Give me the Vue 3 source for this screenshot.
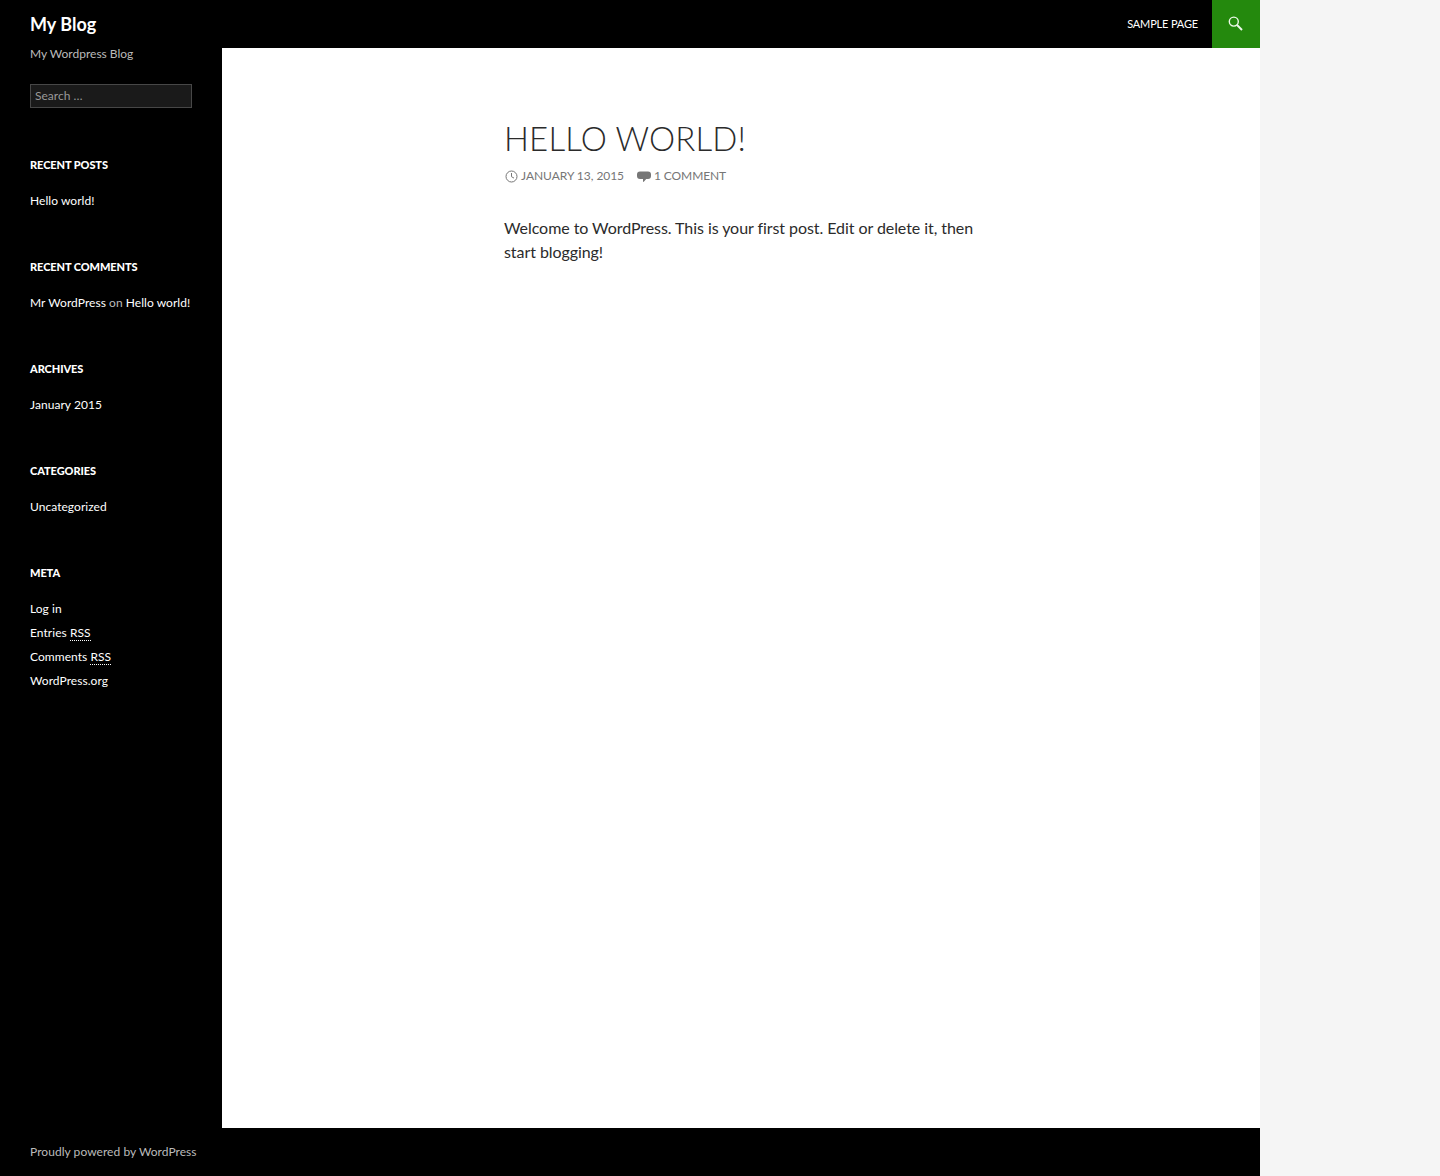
<script setup>
const widgets = [
  { title: 'Recent Posts', items: [[{ t: 'Hello world!', a: 1 }]] },
  { title: 'Recent Comments', items: [[{ t: 'Mr WordPress', a: 1 }, { t: ' on ' }, { t: 'Hello world!', a: 1 }]] },
  { title: 'Archives', items: [[{ t: 'January 2015', a: 1 }]] },
  { title: 'Categories', items: [[{ t: 'Uncategorized', a: 1 }]] },
  {
    title: 'Meta',
    items: [
      [{ t: 'Log in', a: 1 }],
      [{ t: 'Entries ', a: 1 }, { t: 'RSS', abbr: 'Really Simple Syndication' }],
      [{ t: 'Comments ', a: 1 }, { t: 'RSS', abbr: 'Really Simple Syndication' }],
      [{ t: 'WordPress.org', a: 1 }]
    ]
  }
]
</script>

<template>
  <div class="page">
    <header class="masthead">
      <a class="site-title" href="#">My Blog</a>
      <nav class="nav">
        <a href="#">Sample Page</a>
      </nav>
      <div class="search-toggle">
        <svg width="16" height="16" viewBox="0 0 16 16" fill="none" stroke="#eef8ea" aria-hidden="true">
          <circle cx="5.8" cy="5.6" r="4.5" stroke-width="1.4" />
          <path d="M9.1 9 L14 14" stroke-width="1.9" />
        </svg>
      </div>
    </header>
    <div class="main">
      <aside class="sidebar">
        <p class="desc">My Wordpress Blog</p>
        <input class="search" type="search" placeholder="Search …" />
        <section v-for="w in widgets" :key="w.title" class="widget">
          <h1 class="widget-title">{{ w.title }}</h1>
          <ul class="list">
            <li v-for="(row, i) in w.items" :key="i">
              <template v-for="(part, j) in row" :key="j">
                <a v-if="part.a" href="#">{{ part.t }}</a>
                <abbr v-else-if="part.abbr" :title="part.abbr">{{ part.t }}</abbr>
                <span v-else>{{ part.t }}</span>
              </template>
            </li>
          </ul>
        </section>
      </aside>
      <main class="content">
        <article class="entry">
          <h1 class="entry-title">Hello world!</h1>
          <div class="meta">
            <span class="meta-item date">
              <svg class="clock" width="13" height="13" viewBox="0 0 13 13" fill="none" stroke="#767676" aria-hidden="true">
                <circle cx="6.5" cy="6.5" r="5.5" />
                <path d="M6.5 3v3.7l2.5 1.4" />
              </svg>
              January 13, 2015
            </span>
            <span class="meta-item comments">
              <svg width="14" height="13" viewBox="0 0 14 13" fill="#767676" aria-hidden="true">
                <path d="M3 1.5h8a3 3 0 0 1 3 3v1.5a3 3 0 0 1-3 3H9.2L6.8 11.8c-.3.3-.8.1-.8-.3V9H3a3 3 0 0 1-3-3V4.500a3 3 0 0 1 3-3z" />
              </svg>
              1 Comment
            </span>
          </div>
          <p class="text">Welcome to WordPress. This is your first post. Edit or delete it, then start blogging!</p>
        </article>
      </main>
    </div>
    <footer class="footer"><a href="#">Proudly powered by WordPress</a></footer>
  </div>
</template>

<style>
html, body { margin: 0; background: #f5f5f5; }
</style>

<style scoped>
.page {
  width: 1260px;
  height: 1176px;
  background: #000;
  display: flex;
  flex-direction: column;
  font-family: Lato, "Liberation Sans", sans-serif;
  color: #fff;
}
a { color: inherit; text-decoration: none; }
.masthead {
  height: 48px;
  flex: none;
  display: flex;
  align-items: center;
  padding-left: 30px;
}
.site-title {
  font-size: 18px;
  font-weight: 700;
  line-height: 48px;
  margin-right: auto;
}
.nav {
  font-size: 11px;
  line-height: 48px;
  letter-spacing: -0.16px;
  text-transform: uppercase;
  padding-right: 14px;
}
.search-toggle {
  width: 48px;
  height: 48px;
  background: #24890d;
  display: flex;
  align-items: center;
  justify-content: center;
}
.main { flex: 1; display: flex; min-height: 0; }
.sidebar {
  width: 222px;
  flex: none;
  box-sizing: border-box;
  padding: 0 30px;
  font-size: 12px;
  line-height: 24px;
  color: #bbb;
}
.desc {
  margin: -6px 0 0;
  height: 24px;
  line-height: 24px;
  color: #bbb;
}
.search {
  display: block;
  box-sizing: border-box;
  width: 162px;
  height: 24px;
  margin-top: 18px;
  padding: 0 4px 2px;
  background: #1a1a1a;
  border: 1px solid rgba(255, 255, 255, 0.2);
  border-radius: 0;
  outline: none;
  font: 12px/18px Lato, sans-serif;
  color: #999;
  -webkit-appearance: none;
  appearance: none;
}
.search::placeholder { color: #999; opacity: 1; }
.widget { margin-top: 45px; }
.widget + .widget { margin-top: 42px; }
.widget-title {
  margin: 0;
  font-size: 11px;
  font-weight: 900;
  line-height: 24px;
  letter-spacing: -0.08px;
  text-transform: uppercase;
  color: #fff;
}
.list { list-style: none; margin: 12px 0 0; padding: 0; letter-spacing: 0.05px; }
.list a, .list abbr { color: #fff; }
abbr { text-decoration: none; border-bottom: 1px dotted #fff; }
.content {
  flex: 1;
  background: #fff;
  color: #2b2b2b;
  padding-left: 282px;
}
.entry { width: 474px; padding-top: 72px; }
.entry-title {
  margin: 0;
  font-size: 33px;
  font-weight: 300;
  line-height: 36px;
  letter-spacing: 0.17px;
  text-transform: uppercase;
}
.meta {
  display: flex;
  gap: 13px;
  margin-top: 8px;
  font-size: 12px;
  line-height: 24px;
  color: #767676;
  text-transform: uppercase;
}
.meta-item { display: inline-flex; align-items: center; gap: 3px; }
.clock { margin-left: 1px; }
.date { letter-spacing: -0.05px; }
.comments { letter-spacing: -0.1px; }
.text {
  margin: 28px 0 0;
  font-size: 16px;
  line-height: 24px;
  letter-spacing: -0.065px;
}
.footer {
  height: 48px;
  flex: none;
  padding-left: 30px;
  font-size: 12px;
  line-height: 47px;
  letter-spacing: 0.05px;
  color: #bbb;
}
</style>
